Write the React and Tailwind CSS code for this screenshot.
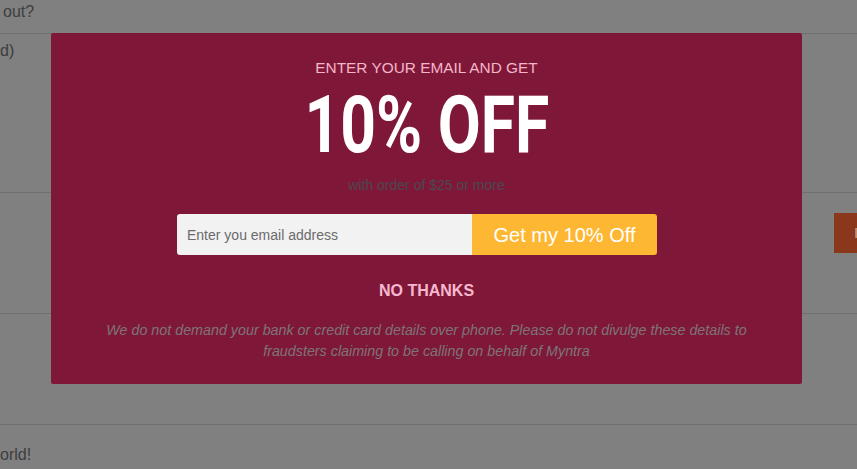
import React from 'react';

export default function App() {
  return (
    <div className="relative w-[857px] h-[469px] overflow-hidden bg-[#808080] text-[#3d3d3d]" style={{ fontFamily: '"Liberation Sans", Arial, sans-serif' }}>
      {/* Page behind the overlay */}
      <div className="flex flex-col">
        <div className="h-[34px] border-b border-[#6f6f6f] pl-[3px] pt-[2px] text-[16px] leading-[20px]">out?</div>
        <div className="h-[159px] border-b border-[#6f6f6f] pt-[7px] text-[16px] leading-[20px]">d)</div>
        <div className="h-[121px] border-b border-[#6f6f6f] flex justify-end items-start pt-[20px]">
          <div className="w-[23px] h-[40px] bg-[#8a371c] flex items-center pl-[20px] text-[#c9a59a] text-[15px]">I</div>
        </div>
        <div className="h-[111px] border-b border-[#6f6f6f]"></div>
        <div className="pt-[20px] text-[16px] leading-[20px]">orld!</div>
      </div>

      {/* Modal */}
      <div className="absolute left-[51px] top-[33px] w-[751px] h-[351px] bg-[#7f1838] rounded-[2px] flex flex-col items-center">
        <div className="mt-[25px] text-[15.4px] leading-[20px] text-[#f5b5ca]">ENTER YOUR EMAIL AND GET</div>
        <div className="mt-[9px] h-[76px] flex items-center justify-center">
          <span className="inline-block text-white font-bold text-[80px] leading-none scale-x-[0.78]" style={{ fontFamily: 'Roboto, "Liberation Sans", sans-serif' }}>10% OFF</span>
        </div>
        <div className="mt-[13px] text-[14px] leading-[18px] text-[#4b4850]">with order of $25 or more</div>
        <div className="mt-[20px] mr-[19px] flex w-[480px] h-[41px] rounded-[3px] overflow-hidden">
          <input
            type="text"
            placeholder="Enter you email address"
            className="w-[295px] h-full bg-[#f2f2f2] pl-[10px] text-[14px] text-[#555] placeholder-[#6b6b6b] outline-none"
          />
          <button className="flex-1 h-full bg-[#fdb733] text-white text-[20px]">Get my 10% Off</button>
        </div>
        <div className="mt-[27px] text-[16px] leading-[18px] font-bold text-[#f7b8cf]">NO THANKS</div>
        <div className="mt-[20px] px-[50px] text-center italic text-[14.3px] leading-[21px] text-[#7d7479]">
          We do not demand your bank or credit card details over phone. Please do not divulge these details to
          fraudsters claiming to be calling on behalf of Myntra
        </div>
      </div>
    </div>
  );
}
